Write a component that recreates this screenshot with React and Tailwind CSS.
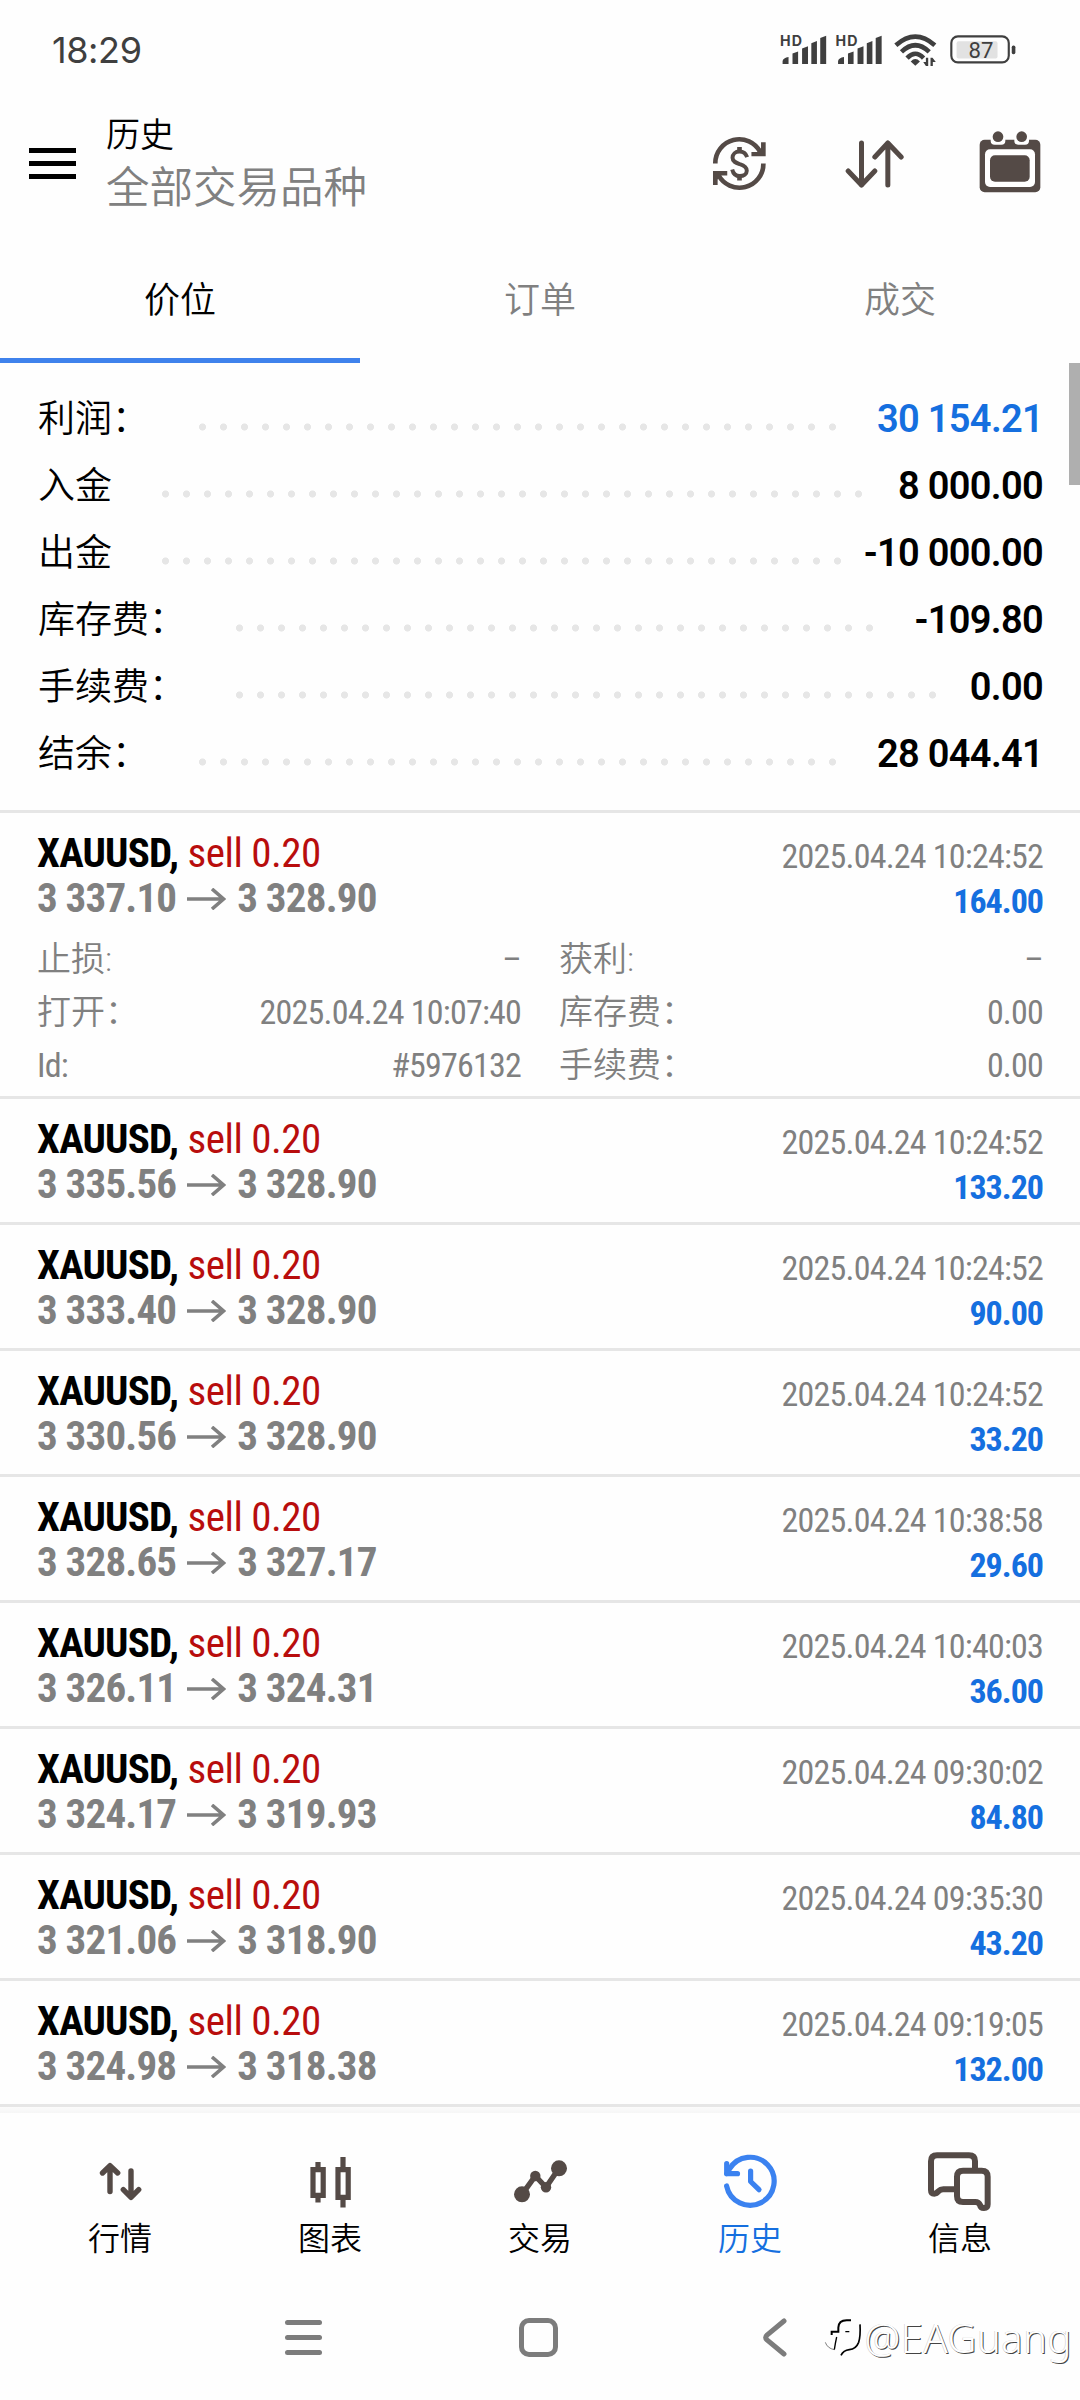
const SUMMARY = [
  { label: '利润：', value: '30 154.21', dots: 31, blue: true },
  { label: '入金', value: '8 000.00', dots: 34 },
  { label: '出金', value: '-10 000.00', dots: 33 },
  { label: '库存费：', value: '-109.80', dots: 31 },
  { label: '手续费：', value: '0.00', dots: 34 },
  { label: '结余：', value: '28 044.41', dots: 31 },
]

const DEALS = [
  {
    from: '3 337.10', to: '3 328.90', time: '2025.04.24 10:24:52', profit: '164.00',
    details: [
      ['止损:', '–', '获利:', '–'],
      ['打开：', '2025.04.24 10:07:40', '库存费：', '0.00'],
      ['Id:', '#5976132', '手续费：', '0.00'],
    ],
  },
  { from: '3 335.56', to: '3 328.90', time: '2025.04.24 10:24:52', profit: '133.20' },
  { from: '3 333.40', to: '3 328.90', time: '2025.04.24 10:24:52', profit: '90.00' },
  { from: '3 330.56', to: '3 328.90', time: '2025.04.24 10:24:52', profit: '33.20' },
  { from: '3 328.65', to: '3 327.17', time: '2025.04.24 10:38:58', profit: '29.60' },
  { from: '3 326.11', to: '3 324.31', time: '2025.04.24 10:40:03', profit: '36.00' },
  { from: '3 324.17', to: '3 319.93', time: '2025.04.24 09:30:02', profit: '84.80' },
  { from: '3 321.06', to: '3 318.90', time: '2025.04.24 09:35:30', profit: '43.20' },
  { from: '3 324.98', to: '3 318.38', time: '2025.04.24 09:19:05', profit: '132.00' },
]

/* ── Status bar ─────────────────────────────────────────────── */

function Signal({ x }) {
  return (
    <g transform={`translate(${x} 0)`}>
      <text x="295" y="137" fontSize="43" fontWeight="700" fontFamily="Inter, sans-serif" textLength="67">HD</text>
      <path d="M303 192V183Q305 174 321 171V192Z M333 192V160L350 154V192Z M362 192V145L380 138V192Z M390 192V129L407 122V192Z M417 192V113L435 106V192Z" />
    </g>
  )
}

function StatusIcons() {
  return (
    <svg className="w-[241px] h-[35px]" viewBox="290 98 722 106" fill="#3f3f3f">
      <Signal x={0} />
      <Signal x={168} />
      <g fill="none" stroke="#3f3f3f" strokeWidth="14">
        <path d="M646 135Q705 83 764 135" />
        <path d="M663 155Q705 115 747 155" />
        <path d="M680 174Q705 148 730 174" />
      </g>
      <path d="M691 184Q705 170 719 184L705 197Z" />
      <path d="M737 173H744V198H737L729 186H737Z M751 198V173H757L767 186H758V198Z" />
      <rect x="830" y="123" width="124" height="52" rx="6" fill="#e2e2e2" />
      <rect x="814" y="108" width="174" height="79" rx="20" fill="none" stroke="#3f3f3f" strokeWidth="6.5" />
      <rect x="997" y="136" width="11" height="26" rx="5" />
      <text x="904" y="173" fontSize="67" textAnchor="middle" fontFamily="Roboto, sans-serif">87</text>
    </svg>
  )
}

/* ── Toolbar icons ──────────────────────────────────────────── */

function CurrencyIcon() {
  return (
    <svg className="w-[55px] h-[55px]" viewBox="96 407 166 166" fill="none" stroke="#544a46" strokeWidth="14">
      <path d="M106 490A72 72 0 0 1 242 456" />
      <path d="M251 490A72 72 0 0 1 115 524" />
      <path d="M258 426V468H215V455H233L244 443V426Z" fill="#544a46" stroke="none" />
      <path d="M99 555V513H142V526H124L113 538V555Z" fill="#544a46" stroke="none" />
      <path d="M179 440V456M179 526V541" />
      <path strokeWidth="12" d="M202 471C198 459 190 454 179 454C166 454 158 463 158 473C158 485 168 488 180 492C193 496 201 502 201 512C201 521 192 528 180 528C167 528 160 521 157 508" />
    </svg>
  )
}

function SortIcon() {
  return (
    <svg className="w-[59px] h-12" viewBox="498 418 176 144" fill="none" stroke="#544a46" strokeWidth="15" strokeLinecap="round" strokeLinejoin="round">
      <path d="M547 427V553M507 511L547 553L587 511" />
      <path d="M626 553V427M587 469L626 427L666 469" />
    </svg>
  )
}

function CalendarIcon() {
  return (
    <svg className="mb-[3px] w-[62px] h-[62px]" viewBox="898 394 186 186" fill="#544a46">
      <rect x="900" y="420" width="182" height="158" rx="15" />
      <path fill="#fff" d="M933 418H977V424Q977 435 965 435H945Q933 435 933 424Z M1004 418H1048V424Q1048 435 1036 435H1016Q1004 435 1004 424Z" />
      <circle cx="955" cy="411" r="16" />
      <circle cx="1026" cy="411" r="16" />
      <rect x="916" y="449" width="150" height="113" rx="15" fill="#fff" />
      <rect x="931" y="467" width="119" height="79" rx="15" />
    </svg>
  )
}

/* ── Bottom navigation icons ────────────────────────────────── */

function QuotesIcon() {
  return (
    <svg className="size-16" viewBox="88 2150 64 64" fill="none" stroke="#544a46" strokeWidth="5.4" strokeLinecap="round" strokeLinejoin="round">
      <path d="M110 2191.5V2166M102.5 2173L110 2165.7L117.7 2173" />
      <path d="M131 2171V2197M123.3 2189.7L131 2197.3L138.7 2189.7" />
    </svg>
  )
}

function ChartIcon() {
  return (
    <svg className="size-16" viewBox="298 2150 64 64" fill="none" stroke="#544a46" strokeWidth="5.2">
      <path d="M313 2169.7H323.2V2195.3H313Z M318 2162V2168M318 2197V2202.5" />
      <path d="M338 2169.7H348.2V2197.3H338Z M343 2157V2168M343 2199V2207.5" />
    </svg>
  )
}

function TradeIcon() {
  return (
    <svg className="size-16" viewBox="508 2150 64 64" fill="#544a46">
      <path d="M522 2194.3L535.3 2176L546 2187.3L559 2168.3" fill="none" stroke="#544a46" strokeWidth="5.4" />
      <circle cx="522" cy="2194.3" r="8" />
      <circle cx="535.3" cy="2176" r="5.2" />
      <circle cx="546" cy="2187.3" r="5.2" />
      <circle cx="559" cy="2168.3" r="8" />
    </svg>
  )
}

function HistoryIcon() {
  return (
    <svg className="size-16" viewBox="718 2150 64 64" fill="none" stroke="#3b82f0" strokeWidth="5.2" strokeLinecap="round" strokeLinejoin="round">
      <path d="M726.6 2186A24 24 0 1 0 729.5 2169L726.8 2173.5" />
      <path d="M726.7 2163.5V2173.7H737.5" />
      <path d="M750.6 2171V2181.5L759 2189.7" />
    </svg>
  )
}

function MessagesIcon() {
  return (
    <svg className="size-16" viewBox="1284 30 192 192" fill="none" stroke="#544a46" strokeWidth="18">
      <path d="M1425 84V64Q1425 46 1407 46H1311Q1293 46 1293 64V150Q1293 161 1303 161Q1310 161 1315 154Q1321 148 1330 148H1364" />
      <path d="M1371 110Q1371 92 1389 92H1445Q1463 92 1463 110V193Q1463 204 1452 204Q1442 204 1440 195Q1436 186 1426 186H1389Q1371 186 1371 168Z" />
    </svg>
  )
}

const NAV = [
  { label: '行情', Icon: QuotesIcon },
  { label: '图表', Icon: ChartIcon },
  { label: '交易', Icon: TradeIcon },
  { label: '历史', Icon: HistoryIcon, active: true },
  { label: '信息', Icon: MessagesIcon },
]

/* ── Content ────────────────────────────────────────────────── */

function SummaryRow({ label, value, dots, blue }) {
  return (
    <div className="flex h-[67px] items-center text-[37px] leading-[67px]">
      <span className="pt-[2px] whitespace-nowrap font-[350]">{label}</span>
      {/* dotted leader, one 21px tile per dot */}
      <span
        className="mt-4 ml-[43px] h-[10px] shrink-0 bg-[radial-gradient(circle,#e6e6e6_3.2px,transparent_3.9px)] bg-[length:21px_10px]"
        style={{ width: dots * 21 }}
      />
      <span className={`ml-auto pt-[2px] whitespace-nowrap text-[38px] font-semibold tracking-[-0.7px] ${blue ? 'text-[#156fdf]' : 'text-black'}`}>
        {value}
      </span>
    </div>
  )
}

function Detail({ label, value }) {
  return (
    <div className="flex justify-between whitespace-nowrap">
      <span className={label === 'Id:' ? 'tracking-[-0.8px]' : 'font-[350]'}>{label}</span>
      <span className="tracking-[-0.8px]">{value}</span>
    </div>
  )
}

function Deal({ deal }) {
  return (
    <div className={`border-b-[3px] border-[#e6e6e6] pr-[37px] pl-[37px] pt-[18px] font-stretch-[75%] ${deal.details ? 'h-[286px]' : 'h-[126px]'}`}>
      <div className="flex justify-between whitespace-nowrap leading-[45px]">
        <div className="text-[41px]">
          <div>
            <span className="font-bold tracking-[-0.8px]">XAUUSD,</span>{' '}
            <span className="text-[#b80d0d] tracking-[-0.5px]">sell 0.20</span>
          </div>
          <div className="flex items-center font-bold text-[#808080] tracking-[-0.8px]">
            <span>{deal.from}</span>
            <svg className="mx-[11px] h-[22px] w-[39px]" viewBox="0 0 39 22" fill="none" stroke="#808080" strokeWidth="3.6">
              <path d="M0 11H37M25 1L36.5 11L25 21" />
            </svg>
            <span>{deal.to}</span>
          </div>
        </div>
        <div className="pt-[3px] text-right text-[34px]">
          <div className="text-[#808080] tracking-[-0.8px]">{deal.time}</div>
          <div className="font-bold text-[#156fdf] tracking-[-1px]">{deal.profit}</div>
        </div>
      </div>
      {deal.details && (
        <div className="mt-[9px] grid grid-cols-2 gap-x-[38px] text-[34px] leading-[53px] text-[#808080]">
          {deal.details.map(([l1, v1, l2, v2]) => [
            <Detail key={l1} label={l1} value={v1} />,
            <Detail key={l2} label={l2} value={v2} />,
          ])}
        </div>
      )}
    </div>
  )
}

function Watermark() {
  return (
    <div className="absolute top-[35px] right-[8px] flex h-[56px] items-center">
      <svg className="mr-[3px] h-[42px] w-[38px]" viewBox="74 74 114 126" fill="none" stroke="#000">
        <path strokeWidth="6" d="M155 84H142Q118 84 117 106V118H97V128" />
        <path strokeWidth="4" d="M138 118H150M112 134Q108 152 105 172" />
        <path strokeWidth="1.5" d="M78 150Q84 168 105 172" />
        <path strokeWidth="5" d="M182 96Q184 130 178 150Q170 170 150 172Q132 174 125 189" />
      </svg>
      <span className="font-['Noto_Sans'] text-[40px] leading-[56px] font-light tracking-[0.5px] text-white [text-shadow:1px_1px_0_#444,-0.5px_-0.5px_0_#ccc]">
        @EAGuang
      </span>
    </div>
  )
}

export default function App() {
  return (
    <div className="flex h-[2400px] w-[1080px] flex-col overflow-hidden bg-[#fefefe] font-[Roboto,'Noto_Sans_CJK_SC',sans-serif] text-black">
      {/* Status bar */}
      <div className="flex h-[98px] items-center justify-between pt-[2px] pr-[62px] pl-[52px]">
        <span className="font-[Inter] text-[36px] tracking-[-0.4px] text-[#3f3f3f]">18:29</span>
        <StatusIcons />
      </div>

      {/* Toolbar */}
      <div className="flex h-[131px] items-center pr-[39px] pl-[29px]">
        <div className="flex w-[47px] flex-col gap-2">
          <div className="h-[5px] bg-black" />
          <div className="h-[5px] bg-black" />
          <div className="h-[5px] bg-black" />
        </div>
        <div className="ml-[30px] font-[350]">
          <div className="text-[34px] leading-[50px]">历史</div>
          <div className="text-[43.5px] leading-[58px] text-[#808080]">全部交易品种</div>
        </div>
        <div className="ml-auto flex items-center">
          <CurrencyIcon />
          <span className="w-[78px]" />
          <SortIcon />
          <span className="w-[75px]" />
          <CalendarIcon />
        </div>
      </div>

      {/* Tabs */}
      <div className="grid h-[134px] grid-cols-3 text-center text-[36px] leading-[114px] font-[350] text-[#808080]">
        <div className="border-b-[5px] border-[#3f82ec] pt-[15px] text-black">价位</div>
        <div className="pt-[15px]">订单</div>
        <div className="pt-[15px]">成交</div>
      </div>

      {/* History list */}
      <div className="relative h-[1744px] shrink-0">
        <div className="h-[450px] border-b-[3px] border-[#e6e6e6] pt-[22px] pr-[37px] pl-[38px]">
          {SUMMARY.map((row) => (
            <SummaryRow key={row.label} {...row} />
          ))}
        </div>
        {DEALS.map((deal, i) => (
          <Deal key={i} deal={deal} />
        ))}
        <div className="absolute top-0 right-0 h-[122px] w-[11px] bg-[#afafaf]" />
      </div>
      <div className="h-[6px] bg-linear-to-b from-[#fbfbfb] to-[#f6f6f6]" />

      {/* Bottom navigation */}
      <div className="grid h-[162px] grid-cols-5 px-[15px] pt-[37px]">
        {NAV.map(({ label, Icon, active }) => (
          <div key={label} className="flex flex-col items-center">
            <Icon />
            <span className={`mt-[3px] text-[32px] leading-[44px] font-[350] ${active ? 'text-[#156fdf]' : 'text-black'}`}>{label}</span>
          </div>
        ))}
      </div>

      {/* System buttons */}
      <div className="relative grid h-[125px] grid-cols-3 place-items-center pr-[188px] pl-[186px]">
        <div className="flex w-[37px] flex-col gap-[10px]">
          <div className="h-[5px] rounded-full bg-[#7c7c7c]" />
          <div className="h-[5px] rounded-full bg-[#7c7c7c]" />
          <div className="h-[5px] rounded-full bg-[#7c7c7c]" />
        </div>
        <div className="h-[39px] w-[39px] rounded-[10px] border-[5px] border-[#7c7c7c]" />
        <svg className="h-[39px] w-[25px]" viewBox="0 0 25 39" fill="none" stroke="#7c7c7c" strokeWidth="5" strokeLinecap="round">
          <path d="M22 3L5 17Q2.500 19.500 5 22L22 36" />
        </svg>
        <Watermark />
      </div>
    </div>
  )
}
